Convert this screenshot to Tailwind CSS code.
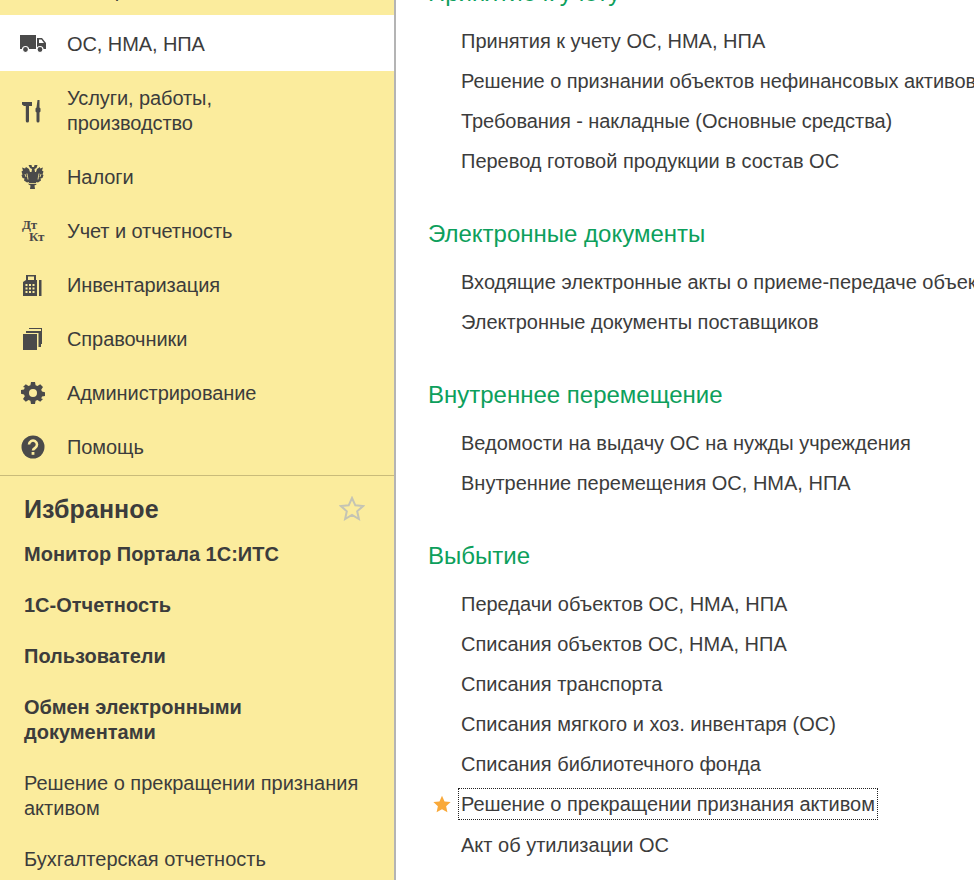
<!DOCTYPE html>
<html lang="ru">
<head>
  <meta charset="UTF-8" />
  <title>ОС, НМА, НПА</title>
  <script src="https://cdn.jsdelivr.net/npm/@tailwindcss/browser@4"></script>
</head>
<body class="bg-white">
  <div class="flex h-[880px] w-[974px] overflow-hidden font-['Liberation_Sans',Arial,sans-serif] text-[20px] leading-[25px] text-[#3c3c3c]">

    <!-- Левая панель -->
    <aside class="w-[396px] shrink-0 bg-[#fbec9d] border-r-2 border-[#b4b4b4] overflow-hidden">
      <div class="flex items-center h-[54px] -mt-[39px] pt-[4px] pl-[67px] whitespace-nowrap">Материальные запасы</div>

      <nav class="tracking-[-0.08px]">
        <div class="flex items-center h-[56px] pt-[2px] bg-white pl-[20px]">
          <svg class="w-[26px] h-[20px] mr-[21px]" viewBox="0 0 26 20" fill="#4a4a4a"><path d="M0 1h16v14H0zM17 4h5l4 5v6h-9zM19 5.500V9h5l-2.600-3.500z" fill-rule="evenodd"/><circle cx="5.500" cy="15.500" r="3" stroke="#fff" stroke-width="1.200"/><circle cx="20" cy="15.500" r="3" stroke="#fff" stroke-width="1.200"/></svg>
          <span>ОС, НМА, НПА</span>
        </div>
        <div class="flex items-center h-[78px] pt-[2px] pl-[20px]">
          <svg class="w-[26px] h-[23px] mr-[21px]" viewBox="0 0 26 23" fill="#4a4a4a"><path d="M2 2h10v4H9v15a1.600 1.600 0 0 1-3.200 0V6H4L2 4.500zM17.500 0h2v7.500l1 1v3l-1 1V21a1.500 1.500 0 0 1-3 0v-8.500l-1-1v-3l1-1z"/></svg>
          <span>Услуги, работы,<br>производство</span>
        </div>
        <div class="flex items-center h-[54px] pt-[2px] pl-[20px]">
          <svg class="w-[26px] h-[24px] mr-[21px]" viewBox="0 0 26 24" fill="#4a4a4a"><path d="M8.500 0h3l.5 2h2l.5-2h3l-1 3-2 1 .5 3h-3.500l.5-3-2-1z"/><path d="M10 7l-1-3-3-2-1 1.500-3-1 1 3L1.500 6.500l1 3-1 .5 1 3 2 .5-.5 2 3 2 2-.5-.5 2.500 2 1-.5 3.500h5l-.5-3.500 2-1-.5-2.500 2 .5 3-2-.5-2 2-.5 1-3-1-.5 1-3-1.500-1 1-3-3 1L20 2l-3 2-1 3z"/><path d="M7 8.500l1 6M5 9l1 3M19 8.500l-1 6M21 9l-1 3M9 18.500h8" fill="none" stroke="#fbec9d" stroke-width=".8"/></svg>
          <span>Налоги</span>
        </div>
        <div class="flex items-center h-[54px] pt-[2px] pl-[20px]">
          <div class="relative w-[26px] h-[24px] mr-[21px] font-['Liberation_Serif',serif] font-bold text-[13px] leading-[11px] text-[#4a4a4a]">
            <span class="absolute left-[2px] top-0">Дт</span>
            <span class="absolute left-[9px] top-[12px]">Кт</span>
          </div>
          <span>Учет и отчетность</span>
        </div>
        <div class="flex items-center h-[54px] pt-[2px] pl-[20px]">
          <svg class="w-[26px] h-[22px] mr-[21px]" viewBox="0 0 26 22" fill="#4a4a4a"><path fill-rule="evenodd" d="M6 1h10v5h1v16H3V8l3-2zM8 2.500V6h6V2.500zM5.500 10v2h2v-2zm3.500 0v2h2v-2zm3.500 0v2h2v-2zm-7 3.500v2h2v-2zm3.500 0v2h2v-2zm3.500 0v2h2v-2zm-7 3.500v2h2v-2zm3.500 0v2h2v-2zm3.500 0v2h2v-2z"/><path d="M19 6h2.500v16H19z"/></svg>
          <span>Инвентаризация</span>
        </div>
        <div class="flex items-center h-[54px] pt-[2px] pl-[20px]">
          <svg class="w-[26px] h-[22px] mr-[21px]" viewBox="0 0 26 22" fill="#4a4a4a"><path d="M3 6h14v16H3zM6 3h15v16h-2.500V5H6zM9 0h13v16h-1V1H9z"/></svg>
          <span>Справочники</span>
        </div>
        <div class="flex items-center h-[54px] pt-[2px] pl-[20px]">
          <svg class="w-[26px] h-[24px] mr-[21px]" viewBox="0 0 24 24" fill="#4a4a4a"><path fill-rule="evenodd" d="M10 1h4l.6 3.200 1.900.8L19.200 3.200 22 6l-1.800 2.700.8 1.900 3 .6v3.800l-3 .6-.8 1.900L22 18l-2.800 2.800-2.700-1.800-1.900.8L14 23h-4l-.6-3.200-1.900-.8-2.700 1.800L2 18l1.800-2.700-.8-1.900-3-.6V9l3-.6.8-1.900L2 6l2.800-2.800L7.500 5l1.900-.8zM12 8a4 4 0 1 0 0 8 4 4 0 0 0 0-8z"/></svg>
          <span>Администрирование</span>
        </div>
        <div class="flex items-center h-[54px] pt-[2px] pl-[20px]">
          <svg class="w-[26px] h-[24px] mr-[21px]" viewBox="0 0 24 24"><circle cx="12" cy="12" r="11.500" fill="#4a4a4a"/><path d="M8 9.500a4 4 0 1 1 6 3.500c-1.500.8-2 1.300-2 2.500" fill="none" stroke="#fbec9d" stroke-width="2.600"/><rect x="10.600" y="17" width="2.800" height="2.800" fill="#fbec9d"/></svg>
          <span>Помощь</span>
        </div>
      </nav>

      <section class="border-t border-[#c9bb7a] mt-[2px] pl-[24px] pr-[28px]">
        <div class="flex items-center justify-between h-[64px] pt-[2px]">
          <h2 class="font-bold text-[25px] tracking-[0.1px]">Избранное</h2>
          <svg class="w-[26px] h-[26px] -ml-[2px] mr-[1px]" viewBox="0 0 26 26" fill="none" stroke="#c4c4b4" stroke-width="2"><path d="M13 2l3.300 7.300 7.700.8-5.800 5.200 1.700 7.700-6.900-4-6.900 4 1.700-7.700L2 10.100l7.700-.8z"/></svg>
        </div>
        <div class="font-bold mt-[2px] h-[51px]">Монитор Портала 1С:ИТС</div>
        <div class="font-bold h-[51px]">1С-Отчетность</div>
        <div class="font-bold h-[51px]">Пользователи</div>
        <div class="font-bold h-[76px]">Обмен электронными<br>документами</div>
        <div class="h-[76px]">Решение о прекращении признания<br>активом</div>
        <div>Бухгалтерская отчетность</div>
      </section>
    </aside>

    <!-- Основная часть -->
    <main class="flex-1 pl-[32px] -mt-[27px] whitespace-nowrap overflow-hidden">
      <h3 class="text-[24px] leading-[40px] text-[#0d9f5c]">Принятие к учету</h3>
      <ul class="pl-[33px] mt-[8px]">
        <li class="h-[40px] leading-[40px]">Принятия к учету ОС, НМА, НПА</li>
        <li class="h-[40px] leading-[40px] tracking-[-0.06px]">Решение о признании объектов нефинансовых активов</li>
        <li class="h-[40px] leading-[40px] tracking-[-0.06px]">Требования - накладные (Основные средства)</li>
        <li class="h-[40px] leading-[40px]">Перевод готовой продукции в состав ОС</li>
      </ul>

      <h3 class="text-[24px] leading-[40px] text-[#0d9f5c] mt-[33px]">Электронные документы</h3>
      <ul class="pl-[33px] mt-[8px]">
        <li class="h-[40px] leading-[40px]">Входящие электронные акты о приеме-передаче объектов</li>
        <li class="h-[40px] leading-[40px]">Электронные документы поставщиков</li>
      </ul>

      <h3 class="text-[24px] leading-[40px] text-[#0d9f5c] mt-[33px]">Внутреннее перемещение</h3>
      <ul class="pl-[33px] mt-[8px]">
        <li class="h-[40px] leading-[40px]">Ведомости на выдачу ОС на нужды учреждения</li>
        <li class="h-[40px] leading-[40px]">Внутренние перемещения ОС, НМА, НПА</li>
      </ul>

      <h3 class="text-[24px] leading-[40px] text-[#0d9f5c] mt-[33px]">Выбытие</h3>
      <ul class="pl-[33px] mt-[8px]">
        <li class="h-[40px] leading-[40px]">Передачи объектов ОС, НМА, НПА</li>
        <li class="h-[40px] leading-[40px]">Списания объектов ОС, НМА, НПА</li>
        <li class="h-[40px] leading-[40px]">Списания транспорта</li>
        <li class="h-[40px] leading-[40px]">Списания мягкого и хоз. инвентаря (ОС)</li>
        <li class="h-[40px] leading-[40px]">Списания библиотечного фонда</li>
        <li class="relative h-[41px] leading-[41px]">
          <svg class="absolute -left-[28px] top-[11px] w-[18px] h-[18px]" viewBox="0 0 24 24" fill="#f9a93a"><path d="M12 1l3.400 7.500 8.100.9-6 5.500 1.700 8.100-7.200-4.100-7.200 4.100 1.700-8.100-6-5.500 8.100-.9z"/></svg>
          <span class="inline-block h-[32px] leading-[30px] -ml-[3px] px-[2px] border border-dotted border-[#222] tracking-[-0.04px]">Решение о прекращении признания активом</span>
        </li>
        <li class="h-[40px] leading-[40px]">Акт об утилизации ОС</li>
      </ul>
    </main>
  </div>
</body>
</html>
